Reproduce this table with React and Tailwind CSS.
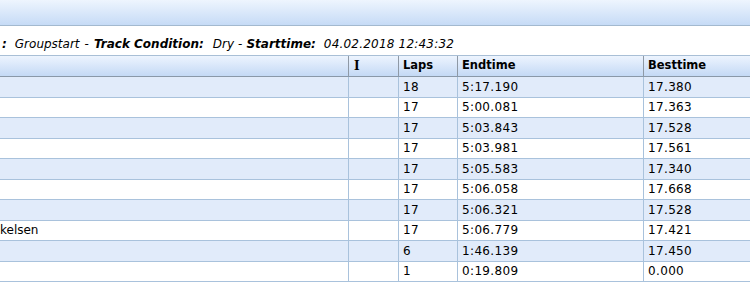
const rows = [
  { name: '', laps: '18', end: '5:17.190', best: '17.380' },
  { name: '', laps: '17', end: '5:00.081', best: '17.363' },
  { name: '', laps: '17', end: '5:03.843', best: '17.528' },
  { name: '', laps: '17', end: '5:03.981', best: '17.561' },
  { name: '', laps: '17', end: '5:05.583', best: '17.340' },
  { name: '', laps: '17', end: '5:06.058', best: '17.668' },
  { name: '', laps: '17', end: '5:06.321', best: '17.528' },
  { name: 'kelsen', laps: '17', end: '5:06.779', best: '17.421' },
  { name: '', laps: '6', end: '1:46.139', best: '17.450' },
  { name: '', laps: '1', end: '0:19.809', best: '0.000' },
]

const cols = 'grid grid-cols-[348px_50px_59px_186px_1fr]'

export default function App() {
  return (
    <div className="w-[750px] h-[284px] overflow-hidden bg-white text-black font-['DejaVu_Sans',Verdana,sans-serif]">
      <div className="h-[26px] border-b border-[#a3b9cf] bg-gradient-to-b from-[#eef5fe] to-[#c6dbf6]"></div>

      <div className="h-[29px] flex items-center pl-[2px] pt-[7px] text-[12px] whitespace-nowrap">
        <b className="italic">:</b>
        <i className="ml-[8px]">Groupstart</i>
        <span className="mx-[5px]">-</span>
        <b className="italic">Track Condition:</b>
        <i className="ml-[9px]">Dry</i>
        <span className="mx-[4px]">-</span>
        <b className="italic">Starttime:</b>
        <i className="ml-[8px] tracking-[0.2px]">04.02.2018 12:43:32</i>
      </div>

      <div className={`${cols} h-[22px] border-y border-t-[#a9bfd6] border-b-[#8a98a8] bg-gradient-to-b from-[#edf4fe] to-[#c4d9f5] text-[11.5px] font-bold`}>
        <div></div>
        <div className="border-l border-[#8e99a6] pl-[5px] flex items-center font-['DejaVu_Serif',serif] text-[12px]">I</div>
        <div className="border-l border-[#8e99a6] pl-[4px] flex items-center">Laps</div>
        <div className="border-l border-[#8e99a6] pl-[4px] flex items-center">Endtime</div>
        <div className="border-l border-[#8e99a6] pl-[4px] flex items-center">Besttime</div>
      </div>

      {rows.map((row, i) => (
        <div
          key={i}
          className={`${cols} h-[20.5px] border-b border-[#a9c2dc] text-[12px] tracking-[0.35px] ${i % 2 === 0 ? 'bg-[#e1ebfa]' : 'bg-white'}`}
        >
          <div className="flex items-center overflow-hidden tracking-normal">{row.name}</div>
          <div className="border-l border-[#a9c2dc]"></div>
          <div className="border-l border-[#a9c2dc] pl-[4px] flex items-center">{row.laps}</div>
          <div className="border-l border-[#a9c2dc] pl-[4px] flex items-center">{row.end}</div>
          <div className="border-l border-[#a9c2dc] pl-[4px] flex items-center">{row.best}</div>
        </div>
      ))}
    </div>
  )
}
